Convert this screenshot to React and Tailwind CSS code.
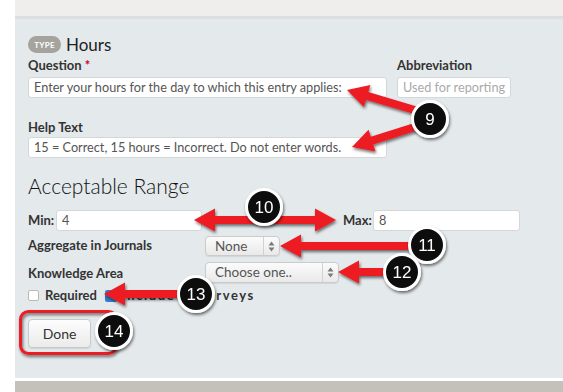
import React from "react";

const arrowPoints = (x1, y1, x2, y2, s = 4, hl = 21, hw = 11.5) => {
  const dx = x2 - x1;
  const dy = y2 - y1;
  const len = Math.sqrt(dx * dx + dy * dy);
  const ux = dx / len;
  const uy = dy / len;
  const nx = -uy;
  const ny = ux;
  const bx = x2 - ux * hl;
  const by = y2 - uy * hl;
  const pts = [
    [x1 + nx * s, y1 + ny * s],
    [bx + nx * s, by + ny * s],
    [bx + nx * hw, by + ny * hw],
    [x2, y2],
    [bx - nx * hw, by - ny * hw],
    [bx - nx * s, by - ny * s],
    [x1 - nx * s, y1 - ny * s],
  ];
  return pts.map((p) => p.join(",")).join(" ");
};

const arrows = [
  [418, 111, 347, 90],
  [418, 126, 352, 147],
  [265, 220, 194, 220],
  [265, 220, 336, 220],
  [420, 246, 280, 246],
  [395, 272, 338, 272],
  [190, 294, 104, 294],
];

const badges = [
  { n: "9", x: 430, y: 119 },
  { n: "10", x: 264, y: 207 },
  { n: "11", x: 427, y: 245 },
  { n: "12", x: 402, y: 272 },
  { n: "13", x: 196, y: 294 },
  { n: "14", x: 114, y: 331 },
];

const Overlay = () => (
  <svg
    className="absolute inset-0 pointer-events-none"
    width="563"
    height="392"
    viewBox="0 0 563 392"
  >
    <defs>
      <filter id="sh" x="-30%" y="-30%" width="160%" height="160%">
        <feDropShadow dx="1" dy="2" stdDeviation="1.6" floodColor="#000" floodOpacity="0.55" />
      </filter>
    </defs>
    <rect
      x="20.5"
      y="311.5"
      width="96"
      height="42"
      rx="8"
      fill="none"
      stroke="#ec1b24"
      strokeWidth="3"
      filter="url(#sh)"
    />
    {arrows.map((a, i) => (
      <polygon key={i} points={arrowPoints(...a)} fill="#ec1b24" filter="url(#sh)" />
    ))}
    {badges.map((b) => (
      <g key={b.n} filter="url(#sh)">
        <circle cx={b.x} cy={b.y} r="17.5" fill="#0d0d0d" stroke="#fff" strokeWidth="3" />
        <text
          x={b.x}
          y={b.y + 6}
          textAnchor="middle"
          fill="#fff"
          fontSize="17"
          fontFamily="'Liberation Sans', Arial, sans-serif"
        >
          {b.n}
        </text>
      </g>
    ))}
  </svg>
);

const SelectArrows = () => (
  <svg width="7" height="11" viewBox="0 0 7 11">
    <path d="M3.5 0.5 L6.5 4.5 L0.5 4.5 Z" fill="#7a7a7a" />
    <path d="M3.5 10.5 L6.5 6.5 L0.5 6.5 Z" fill="#7a7a7a" />
  </svg>
);

const Select = ({ label, w, h }) => (
  <div
    className={`flex items-stretch rounded-[4px] border border-[#cbcbcb] bg-gradient-to-b from-[#fbfbfb] to-[#e9e9e9] shadow-[0_1px_1px_rgba(0,0,0,0.08)] ${w} ${h}`}
  >
    <div className="flex-1 flex items-center pl-[9px] text-[13.5px] text-[#555]">{label}</div>
    <div className="w-[16px] border-l border-[#d2d2d2] flex items-center justify-center">
      <SelectArrows />
    </div>
  </div>
);

const App = () => {
  return (
    <div
      className="relative flex h-[392px] w-[563px] overflow-hidden bg-white text-[#333]"
      style={{ fontFamily: "Lato, 'Open Sans', sans-serif" }}
    >
      <div className="w-[15px] bg-white" />
      <div className="flex-1 flex flex-col">
        <div className="h-[18px] bg-[#efeeec] border-b-2 border-[#dedddb]" />
        <div className="flex-1 bg-[#e4e9ec] border-t border-[#d6e1ea] pl-[13px] flex flex-col">
          <div className="mt-[17px] flex items-center h-[17px]">
            <span className="h-[17px] w-[33px] rounded-full bg-[#a5a39e] text-white text-[8px] font-bold flex items-center justify-center tracking-[0.3px]">
              TYPE
            </span>
            <span className="ml-[5px] text-[17px] leading-none text-[#222]">Hours</span>
          </div>

          <div className="mt-[5px] flex gap-[10px]">
            <div className="w-[359px]">
              <div className="text-[13px] leading-[14px] font-bold">
                Question <span className="text-[#d0021b]">*</span>
              </div>
              <div className="mt-[5px] h-[21px] rounded-[3px] border border-[#d3d7da] bg-white flex items-center pl-[5px] text-[12.7px] text-[#555]">
                Enter your hours for the day to which this entry applies:
              </div>
            </div>
            <div className="w-[114px]">
              <div className="text-[13px] leading-[14px] font-bold">Abbreviation</div>
              <div className="mt-[5px] h-[21px] rounded-[3px] border border-[#d3d7da] bg-white flex items-center pl-[5px] text-[12.7px] text-[#aaa]">
                Used for reporting
              </div>
            </div>
          </div>

          <div className="mt-[22px] w-[359px]">
            <div className="text-[13px] leading-[14px] font-bold">Help Text</div>
            <div className="mt-[3px] h-[21px] rounded-[3px] border border-[#d3d7da] bg-white flex items-center pl-[5px] text-[12.7px] text-[#555]">
              15 = Correct, 15 hours = Incorrect. Do not enter words.
            </div>
          </div>

          <div className="mt-[16px] text-[21px] leading-[24px] font-light text-[#111]">
            Acceptable Range
          </div>

          <div className="mt-[12px] flex items-center h-[21px]">
            <span className="text-[13px] font-bold w-[28px]">Min:</span>
            <div className="w-[146px] h-[21px] rounded-[3px] border border-[#d3d7da] bg-white flex items-center pl-[5px] text-[12.7px] text-[#555]">
              4
            </div>
            <span className="ml-[141px] text-[13px] font-bold w-[30px]">Max:</span>
            <div className="w-[147px] h-[21px] rounded-[3px] border border-[#d3d7da] bg-white flex items-center pl-[5px] text-[12.7px] text-[#555]">
              8
            </div>
          </div>

          <div className="mt-[5px] grid grid-cols-[177px_1fr] items-center">
            <span className="text-[13px] font-bold">Aggregate in Journals</span>
            <Select label="None" w="w-[75px]" h="h-[20px]" />
          </div>

          <div className="mt-[5px] grid grid-cols-[177px_1fr] items-center">
            <span className="text-[13px] font-bold pt-[3px]">Knowledge Area</span>
            <Select label="Choose one.." w="w-[134px]" h="h-[21px]" />
          </div>

          <div className="mt-[5px] flex items-center h-[14px] text-[13px] font-bold">
            <span className="w-[11px] h-[11px] rounded-[2px] border border-[#b9b9b9] bg-white" />
            <span className="ml-[6px]">Required</span>
            <span className="ml-[8px] w-[12px] h-[12px] rounded-[2px] bg-[#2f7fd6]" />
            <span className="ml-[5px] tracking-[1.6px]">Include in Surveys</span>
          </div>

          <div className="mt-[16px] flex items-center">
            <button className="w-[63px] h-[29px] rounded-[4px] border border-[#c9c9c9] bg-gradient-to-b from-[#fdfdfd] to-[#ebebeb] text-[14px] text-[#333] shadow-[0_1px_1px_rgba(0,0,0,0.1)]">
              Done
            </button>
            <span className="ml-[6px] text-[12px] text-[#d0021b]">Cancel</span>
          </div>
        </div>
        <div className="h-[3px] bg-white" />
        <div className="h-[11px] bg-[#c3c1ba]" />
      </div>
      <Overlay />
    </div>
  );
};

export default App;
